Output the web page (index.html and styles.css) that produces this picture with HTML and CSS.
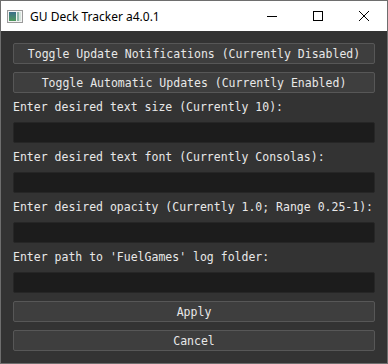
FILE: index.html
```html
<!DOCTYPE html>
<html>
<head>
<meta charset="utf-8">
<link rel="stylesheet" href="styles.css">
</head>
<body>
<div class="window">
  <div class="titlebar">
    <svg class="app-icon" width="16" height="13" viewBox="0 0 16 13">
      <defs>
        <linearGradient id="g" x1="0" y1="0" x2="0" y2="1">
          <stop offset="0" stop-color="#3a6e8a"/>
          <stop offset="1" stop-color="#4f9a5c"/>
        </linearGradient>
      </defs>
      <rect x="0.5" y="0.5" width="15" height="12" fill="#f4f4f4" stroke="#9a9a9a"/>
      <rect x="2" y="2" width="7" height="9" fill="url(#g)"/>
      <rect x="10" y="2" width="2" height="9" fill="#8fb8a8"/>
      <rect x="12" y="2" width="2" height="9" fill="#d6e4dc"/>
    </svg>
    <span class="title">GU Deck Tracker a4.0.1</span>
    <div class="controls">
      <span class="ctl"><svg width="10" height="10" viewBox="0 0 10 10"><path d="M0 5.5H10" stroke="#000" stroke-width="1"/></svg></span>
      <span class="ctl"><svg width="10" height="10" viewBox="0 0 10 10"><rect x="0.5" y="0.5" width="9" height="9" fill="none" stroke="#000" stroke-width="1"/></svg></span>
      <span class="ctl"><svg width="10" height="10" viewBox="0 0 10 10"><path d="M0 0L10 10M10 0L0 10" stroke="#000" stroke-width="1"/></svg></span>
    </div>
  </div>
  <div class="content">
    <div class="btn">Toggle Update Notifications (Currently Disabled)</div>
    <div class="btn">Toggle Automatic Updates (Currently Enabled)</div>
    <div class="label">Enter desired text size (Currently 10):</div>
    <div class="input"></div>
    <div class="label">Enter desired text font (Currently Consolas):</div>
    <div class="input"></div>
    <div class="label">Enter desired opacity (Currently 1.0; Range 0.25-1):</div>
    <div class="input"></div>
    <div class="label">Enter path to 'FuelGames' log folder:</div>
    <div class="input"></div>
    <div class="btn">Apply</div>
    <div class="btn">Cancel</div>
  </div>
</div>
</body>
</html>
```

FILE: styles.css
```css
html, body {
  margin: 0;
  padding: 0;
  background: #ffffff;
}
.window {
  box-sizing: border-box;
  width: 388px;
  height: 364px;
  border: 1px solid #6e6e6e;
  background: #333333;
  display: flex;
  flex-direction: column;
}
.titlebar {
  height: 30px;
  background: #ffffff;
  display: flex;
  align-items: center;
  flex: none;
}
.app-icon {
  margin-left: 6px;
  margin-top: 1px;
  flex: none;
}
.title {
  margin-left: 7px;
  font-family: "Noto Sans", "Liberation Sans", sans-serif;
  font-size: 12px;
  color: #000000;
  margin-top: 1px;
}
.controls {
  margin-left: auto;
  display: flex;
  height: 100%;
}
.ctl {
  width: 46px;
  display: flex;
  align-items: center;
  justify-content: center;
}
.content {
  flex: 1;
  display: flex;
  flex-direction: column;
  gap: 8px;
  padding: 12px 12px 12px 12px;
  font-family: "DejaVu Sans Mono", "Liberation Mono", monospace;
  font-size: 11.5px;
  color: #e8e8e8;
}
.btn {
  box-sizing: border-box;
  height: 21px;
  border: 1px solid #575757;
  border-radius: 2px;
  background: #3e3e3e;
  display: flex;
  align-items: center;
  justify-content: center;
  white-space: nowrap;
}
.label {
  height: 13px;
  line-height: 13px;
  white-space: nowrap;
}
.input {
  box-sizing: border-box;
  height: 21px;
  border: 1px solid #262626;
  border-radius: 2px;
  background: #1c1c1c;
}
```
